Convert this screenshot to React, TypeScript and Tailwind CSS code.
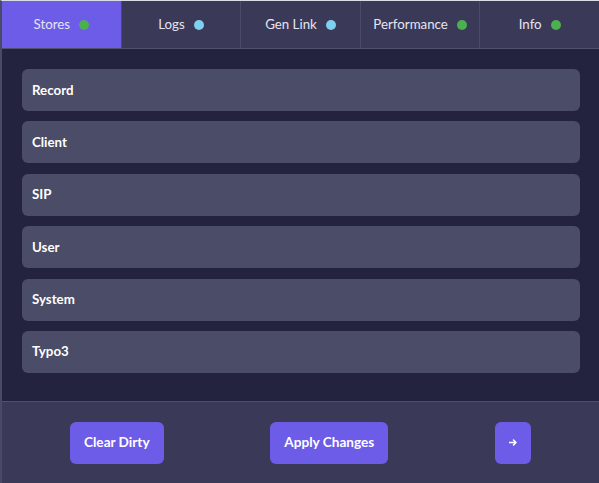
import React from "react";

const tabs = [
  { label: "Stores", dot: "bg-[#4caf50]", active: true },
  { label: "Logs", dot: "bg-[#81cfef]" },
  { label: "Gen Link", dot: "bg-[#81cfef]" },
  { label: "Performance", dot: "bg-[#4caf50]" },
  { label: "Info", dot: "bg-[#4caf50]" },
];

const rows = ["Record", "Client", "SIP", "User", "System", "Typo3"];

export default function App() {
  return (
    <div
      className="w-[599px] h-[483px] flex flex-col bg-[#24233f] border-t border-t-[#dcdce6] border-l-2 border-l-[#4a4a68] overflow-hidden"
      style={{ fontFamily: "Lato, 'Noto Sans', sans-serif" }}
    >
      <div className="flex h-[48px] border-b border-[#4f4f70] shrink-0">
        {tabs.map((t, i) => (
          <div
            key={t.label}
            className={
              "flex-1 flex items-center justify-center gap-[9px] pt-px text-[13.3px] text-[#e4e4f2] " +
              (t.active ? "bg-[#6c5ce7] " : "bg-[#3a3a58] ") +
              (i > 0 ? "border-l border-[#4a4a6a]" : "")
            }
          >
            <span>{t.label}</span>
            <span className={"w-2.5 h-2.5 rounded-full " + t.dot} />
          </div>
        ))}
      </div>
      <div className="flex-1 flex flex-col gap-[10.4px] pt-[20px] pl-[20px] pr-[19px]">
        {rows.map((r) => (
          <div
            key={r}
            className="h-[42px] shrink-0 rounded-md bg-[#4a4c68] flex items-center px-[10px] pt-px text-[13.3px] font-bold text-white"
          >
            {r}
          </div>
        ))}
      </div>
      <div className="h-[82px] shrink-0 bg-[#3a3a58] border-t border-[#4f4f70] flex items-center justify-between px-[68px]">
        <button className="h-[42px] px-[14px] rounded-md bg-[#6c5ce7] text-white text-[13.6px] font-bold">
          Clear Dirty
        </button>
        <button className="h-[42px] px-[14px] rounded-md bg-[#6c5ce7] text-white text-[13.6px] font-bold">
          Apply Changes
        </button>
        <button className="h-[42px] w-[36px] rounded-md bg-[#6c5ce7] text-white flex items-center justify-center">
          <svg width="8" height="7" viewBox="0 0 8 7" fill="none">
            <path d="M0.5 3.5H7M4.5 1L7 3.5L4.5 6" stroke="white" strokeWidth="1.6" strokeLinecap="round" strokeLinejoin="round" />
          </svg>
        </button>
      </div>
    </div>
  );
}
